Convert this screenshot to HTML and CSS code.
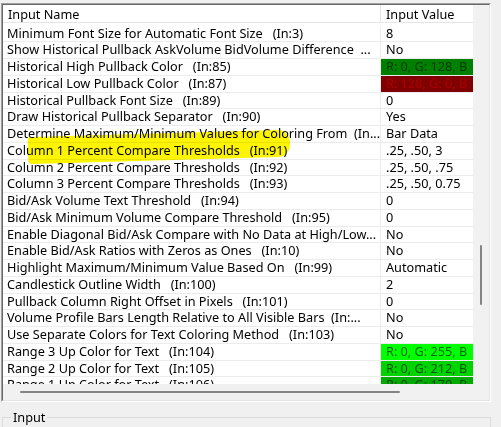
FILE: index.html
```html
<!DOCTYPE html>
<html>
<head>
<meta charset="utf-8">
<link rel="stylesheet" href="styles.css">
</head>
<body>
<div class="page">
  <div class="frame">
    <div class="client">
      <div class="view">
        <div class="header">
          <div class="hcell name">Input Name</div>
          <div class="hcell value">Input Value</div>
        </div>
        <div class="rows">
          <div class="row"><div class="cell name">Minimum Font Size for Automatic Font Size   (In:3)</div><div class="cell value">8</div></div>
          <div class="row"><div class="cell name">Show Historical Pullback AskVolume BidVolume Difference  ...</div><div class="cell value">No</div></div>
          <div class="row"><div class="cell name">Historical High Pullback Color   (In:85)</div><div class="cell value c-green128">R: 0, G: 128, B</div></div>
          <div class="row"><div class="cell name">Historical Low Pullback Color   (In:87)</div><div class="cell value c-red128">R: 128, G: 0, B</div></div>
          <div class="row"><div class="cell name">Historical Pullback Font Size   (In:89)</div><div class="cell value">0</div></div>
          <div class="row"><div class="cell name">Draw Historical Pullback Separator   (In:90)</div><div class="cell value">Yes</div></div>
          <div class="row"><div class="cell name">Determine Maximum/Minimum Values for Coloring From  (In...</div><div class="cell value">Bar Data</div></div>
          <div class="row"><div class="cell name">Column 1 Percent Compare Thresholds   (In:91)</div><div class="cell value">.25, .50, 3</div></div>
          <div class="row"><div class="cell name">Column 2 Percent Compare Thresholds   (In:92)</div><div class="cell value">.25, .50, .75</div></div>
          <div class="row"><div class="cell name">Column 3 Percent Compare Thresholds   (In:93)</div><div class="cell value">.25, .50, 0.75</div></div>
          <div class="row"><div class="cell name">Bid/Ask Volume Text Threshold   (In:94)</div><div class="cell value">0</div></div>
          <div class="row"><div class="cell name">Bid/Ask Minimum Volume Compare Threshold   (In:95)</div><div class="cell value">0</div></div>
          <div class="row"><div class="cell name">Enable Diagonal Bid/Ask Compare with No Data at High/Low...</div><div class="cell value">No</div></div>
          <div class="row"><div class="cell name">Enable Bid/Ask Ratios with Zeros as Ones   (In:10)</div><div class="cell value">No</div></div>
          <div class="row"><div class="cell name">Highlight Maximum/Minimum Value Based On   (In:99)</div><div class="cell value">Automatic</div></div>
          <div class="row"><div class="cell name">Candlestick Outline Width   (In:100)</div><div class="cell value">2</div></div>
          <div class="row"><div class="cell name">Pullback Column Right Offset in Pixels   (In:101)</div><div class="cell value">0</div></div>
          <div class="row"><div class="cell name">Volume Profile Bars Length Relative to All Visible Bars  (In:...</div><div class="cell value">No</div></div>
          <div class="row"><div class="cell name">Use Separate Colors for Text Coloring Method   (In:103)</div><div class="cell value">No</div></div>
          <div class="row"><div class="cell name">Range 3 Up Color for Text   (In:104)</div><div class="cell value c-green255">R: 0, G: 255, B</div></div>
          <div class="row"><div class="cell name">Range 2 Up Color for Text   (In:105)</div><div class="cell value c-green212">R: 0, G: 212, B</div></div>
          <div class="row"><div class="cell name">Range 1 Up Color for Text   (In:106)</div><div class="cell value c-green170">R: 0, G: 170, B</div></div>
        </div>
      </div>
      <div class="vscroll"><div class="vthumb"></div></div>
      <div class="hscroll"><div class="hthumb"></div></div>
      <div class="corner"></div>
    </div>
  </div>
  <fieldset class="group">
    <legend>Input</legend>
  </fieldset>
  <div class="hl"></div>
</div>
</body>
</html>
```
FILE: styles.css
```css
* { box-sizing: border-box; }
body {
  margin: 0;
  background: #f0f0f0;
  font-family: "Noto Sans", "Open Sans", sans-serif;
  font-size: 12.7px;
  color: #000;
}
.page {
  position: relative;
  width: 501px;
  height: 427px;
  overflow: hidden;
  padding: 3px 0 0 1px;
}
.frame {
  width: 490px;
  height: 399px;
  border: 1px solid;
  border-color: #a0a0a0 #ffffff #ffffff #a0a0a0;
}
.client {
  height: 100%;
  border: 1px solid;
  border-color: #696969 #e3e3e3 #e3e3e3 #696969;
  display: grid;
  grid-template-columns: 470px 16px;
  grid-template-rows: 379px 16px;
  background: #fff;
}
.view {
  overflow: hidden;
  background: #fff;
}
.header {
  display: flex;
  height: 18px;
  border-bottom: 1px solid #e5e5e5;
}
.hcell {
  padding: 1px 0 0 5px;
  line-height: 16px;
  white-space: nowrap;
}
.hcell.name { width: 378px; border-right: 1px solid #e5e5e5; }
.hcell.value { width: 92px; }
.rows { padding-top: 2.5px; }
.row {
  display: flex;
  height: 16.76px;
  border-bottom: 1px solid #ececec;
}
.cell {
  white-space: pre;
  line-height: 15.76px;
}
.cell.name { width: 378px; flex: none; padding-left: 4px; border-right: 1px solid #ececec; }
.cell.value { width: 92px; flex: none; padding-left: 5px; }
.c-green128 { background: #008000; color: #003c00; }
.c-red128 { background: #800000; color: #a80000; }
.c-green255 { background: #00ff00; color: #0a6a0a; }
.c-green212 { background: #00d400; color: #055805; }
.c-green170 { background: #00aa00; color: #044a04; }
.vscroll {
  background: #f1f1f1;
  padding-top: 240px;
  display: flex;
  justify-content: center;
}
.vthumb {
  width: 2px;
  height: 60px;
  border-radius: 1px;
  background: #858585;
}
.hscroll {
  background: #f1f1f1;
  padding: 7px 0 0 17px;
}
.hthumb {
  width: 380px;
  height: 2px;
  border-radius: 1px;
  background: #858585;
}
.corner { background: #f1f1f1; }
.group {
  margin: 9px 0 0 1px;
  width: 489px;
  height: 40px;
  border: 1px solid #dcdcdc;
  padding: 0 0 0 8px;
}
.group legend {
  padding: 0 2px;
  line-height: 13px;
}
.hl {
  position: absolute;
  left: 28px;
  top: 137px;
  width: 262px;
  height: 27px;
  background: #fcf400;
  mix-blend-mode: multiply;
  border-radius: 3px 12px 12px 4px;
  transform: rotate(-1.6deg);
  transform-origin: left center;
}
```
